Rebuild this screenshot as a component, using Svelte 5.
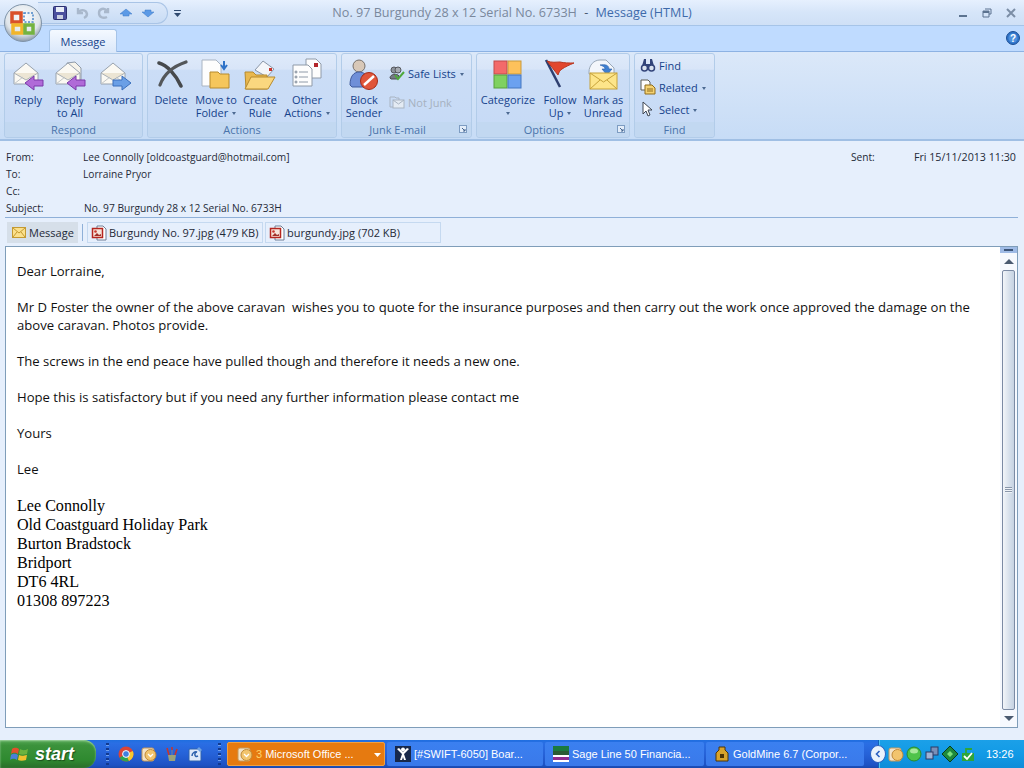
<script>
  const rows = [
    { label: 'From:', value: 'Lee Connolly [oldcoastguard@hotmail.com]' },
    { label: 'To:', value: 'Lorraine Pryor' },
    { label: 'Cc:', value: '' }
  ];
  const attachments = ['Burgundy No. 97.jpg (479 KB)', 'burgundy.jpg (702 KB)'];
  const signature = [
    'Lee Connolly',
    'Old Coastguard Holiday Park',
    'Burton Bradstock',
    'Bridport',
    'DT6 4RL',
    '01308 897223'
  ];
  const quick = ['chrome', 'outlook', 'pens', 'ie'];
</script>

{#snippet envelope()}
  <path d="M3 15 15 5l12 10v11H3z" fill="#fbf9f3" stroke="#98a2ae" />
  <path d="M3 15l12 7 12-7" fill="#ece5d4" stroke="#aab0b6" />
  <path d="M3 26l9-7M27 26l-9-7" stroke="#c2c5c6" fill="none" />
{/snippet}

{#snippet arrowLeft()}
  <path d="M14 25l9-7v4h9v6h-9v4z" fill="#b06ad8" stroke="#7a38a8" />
{/snippet}

{#snippet jpgIcon()}
  <svg class="file" viewBox="0 0 16 16" width="16" height="16">
    <path d="M6 1h6l3 3v11H6z" fill="#fff" stroke="#6f7f96" />
    <rect x="1.500" y="3.500" width="10" height="9" fill="#f7e4da" stroke="#b5261f" stroke-width="1.500" />
    <circle cx="4.500" cy="6.500" r="1.300" fill="#c8352c" />
    <path d="M3 11l3-3 2 2 2-1v2z" fill="#a03028" />
  </svg>
{/snippet}

{#snippet launcher()}
  <svg class="launcher" viewBox="0 0 8 8" width="8" height="8">
    <rect x="0.500" y="0.500" width="7" height="7" fill="#e3edf9" stroke="#7d9cc2" />
    <path d="M3 3l3 3M6 4v2H4" fill="none" stroke="#45658f" />
  </svg>
{/snippet}

<div class="window">
  <svg class="orb" viewBox="0 0 38 38" width="38" height="38">
    <defs>
      <radialGradient id="orbFill" cx="50%" cy="35%" r="65%">
        <stop offset="0" stop-color="#fbfcfd" />
        <stop offset="0.7" stop-color="#dfe5ea" />
        <stop offset="1" stop-color="#8b9aaa" />
      </radialGradient>
    </defs>
    <circle cx="19" cy="19" r="18.500" fill="url(#orbFill)" stroke="#7f93a8" />
    <path d="M8 9h9v9H8z" fill="none" stroke="#d9502a" stroke-width="3.500" />
    <path d="M9 21h9v8H9z" fill="none" stroke="#f2b52a" stroke-width="3.500" />
    <path d="M21 21h8v8h-8z" fill="none" stroke="#74b340" stroke-width="3.500" />
    <path d="M20 9h9v9h-9z" fill="none" stroke="#4a86c8" stroke-width="1.500" stroke-dasharray="2 1.500" />
  </svg>

  <header class="titlebar">
    <div class="title-left">
      <div class="qat">
        <svg viewBox="0 0 14 14" width="14" height="14">
          <rect x="0.500" y="0.500" width="13" height="13" rx="1" fill="#4a4f9e" stroke="#2b2f70" />
          <rect x="3" y="1" width="8" height="5" fill="#e8edf7" />
          <rect x="4" y="9" width="6" height="4" fill="#c9cfe0" />
        </svg>
        <svg viewBox="0 0 14 14" width="14" height="14">
          <path d="M3 2v5h5M3 7c2-4 8-4 9 1 0 2-1 3-3 4" fill="none" stroke="#a9b8cc" stroke-width="2.400" />
        </svg>
        <svg viewBox="0 0 14 14" width="14" height="14">
          <path d="M11 2v4H7M10 5C7 1 2 3 2 7s4 6 8 4" fill="none" stroke="#a9b8cc" stroke-width="2.400" />
        </svg>
        <svg viewBox="0 0 14 14" width="14" height="14">
          <path d="M7 3l6 5h-3v2H4V8H1z" fill="#5c9ae6" stroke="#3f78c4" stroke-width="0.500" />
        </svg>
        <svg viewBox="0 0 14 14" width="14" height="14">
          <path d="M7 11L1 6h3V4h6v2h3z" fill="#5c9ae6" stroke="#3f78c4" stroke-width="0.500" />
        </svg>
      </div>
      <svg class="qat-more" viewBox="0 0 7 7" width="7" height="7">
        <path d="M0 0h7v1H0zM0 3h7L3.500 7z" fill="#2f4a70" />
      </svg>
    </div>
    <div class="title-text">No. 97 Burgundy 28 x 12 Serial No. 6733H <span class="dash">-</span> <span class="title-type">Message (HTML)</span></div>
    <div class="window-btns">
      <svg viewBox="0 0 10 10" width="10" height="10"><rect x="1" y="7" width="8" height="2" fill="#5c7390" /></svg>
      <svg viewBox="0 0 10 10" width="10" height="10">
        <path d="M3 1h6v5H7M1 3h6v6H1z" fill="none" stroke="#5c7390" />
        <rect x="1" y="3" width="6" height="2" fill="#5c7390" />
      </svg>
      <svg viewBox="0 0 10 10" width="10" height="10"><path d="M1 1l8 8M9 1L1 9" stroke="#7c8ea6" stroke-width="2" /></svg>
    </div>
  </header>

  <div class="tabs">
    <div class="tab">Message</div>
    <svg class="help" viewBox="0 0 14 14" width="14" height="14">
      <circle cx="7" cy="7" r="6.500" fill="#2e72c8" stroke="#1d4f94" />
      <circle cx="7" cy="7" r="4.500" fill="#4e90dc" />
      <text x="7" y="10.500" text-anchor="middle" class="help-q">?</text>
    </svg>
  </div>

  <div class="ribbon">
    <section class="group g-respond">
      <div class="group-items">
        <div class="big w-reply">
          <svg viewBox="0 0 34 34" width="34" height="34">{@render envelope()}{@render arrowLeft()}</svg>
          <span>Reply</span>
        </div>
        <div class="big w-all">
          <svg viewBox="0 0 34 34" width="34" height="34">
            <path d="M14 5l8-1 6 6v12H14z" fill="#f6f3ea" stroke="#8f9aa8" />
            {@render envelope()}{@render arrowLeft()}
          </svg>
          <span>Reply<br />to All</span>
        </div>
        <div class="big w-forward">
          <svg viewBox="0 0 34 34" width="34" height="34">
            {@render envelope()}
            <path d="M33 25l-9-7v4h-9v6h9v4z" fill="#6a9fe6" stroke="#3a6fbc" />
          </svg>
          <span>Forward</span>
        </div>
      </div>
      <div class="group-label">Respond</div>
    </section>

    <section class="group g-actions">
      <div class="group-items">
        <div class="big w-delete">
          <svg viewBox="0 0 34 34" width="34" height="34">
            <path d="M5 5c8 2 17 12 22 23" fill="none" stroke="#46494c" stroke-width="3.600" stroke-linecap="round" />
            <path d="M32 4C20 8 10 16 6 27" fill="none" stroke="#54575a" stroke-width="3.200" stroke-linecap="round" />
          </svg>
          <span>Delete</span>
        </div>
        <div class="big w-move">
          <svg viewBox="0 0 34 34" width="34" height="34">
            <path d="M3 2h14l5 5v21H3z" fill="#fdfdfd" stroke="#a9b4c2" />
            <path d="M11 14h8l2 2h9v14H11z" fill="#f5c65c" stroke="#b68a2e" />
            <path d="M25 3v7m-3-3l3 4 3-4" fill="none" stroke="#2e72c8" stroke-width="2" />
          </svg>
          <span>Move to<br />Folder<i class="caret"></i></span>
        </div>
        <div class="big w-rule">
          <svg viewBox="0 0 34 34" width="34" height="34">
            <path d="M12 12l8-9 11 8-7 8z" fill="#f4f6fa" stroke="#8b97a8" />
            <rect x="26" y="10" width="3" height="3" fill="#c8352c" />
            <path d="M2 14h8l3 3h11v14H3z" fill="#e9b84e" stroke="#b68a2e" />
            <path d="M8 19h24l-7 12H2z" fill="#fad77f" stroke="#b68a2e" />
          </svg>
          <span>Create<br />Rule</span>
        </div>
        <div class="big w-other">
          <svg viewBox="0 0 34 34" width="34" height="34">
            <path d="M16 1h10l5 5v14H16z" fill="#fdfdfd" stroke="#8f9aa8" />
            <rect x="24" y="5" width="4" height="4" fill="#b3262c" />
            <path d="M3 7h15l4 4v17H3z" fill="#fdfdfd" stroke="#8f9aa8" />
            <path d="M9 14h9M9 19h9M9 24h9" stroke="#8f9aa8" />
            <circle cx="6" cy="14" r="1" fill="none" stroke="#7a8796" />
            <circle cx="6" cy="19" r="1" fill="none" stroke="#7a8796" />
            <circle cx="6" cy="24" r="1" fill="none" stroke="#7a8796" />
          </svg>
          <span>Other<br />Actions<i class="caret"></i></span>
        </div>
      </div>
      <div class="group-label">Actions</div>
    </section>

    <section class="group g-junk">
      <div class="group-items">
        <div class="big w-block">
          <svg viewBox="0 0 34 34" width="34" height="34">
            <circle cx="12" cy="8" r="6" fill="#d8c8b8" stroke="#77706a" />
            <path d="M3 27c0-9 4-13 9-13s8 3 9 8l-4 7H5z" fill="#6f8fd8" stroke="#3f5a9c" />
            <circle cx="22" cy="23" r="8.500" fill="#e0553a" stroke="#a52c18" />
            <path d="M17 27l10-9" stroke="#fff" stroke-width="2.500" />
          </svg>
          <span>Block<br />Sender</span>
        </div>
        <div class="small-col junk-col">
          <div class="small">
            <svg viewBox="0 0 16 16" width="16" height="16">
              <circle cx="5" cy="5" r="3" fill="#8e949c" stroke="#55585e" />
              <circle cx="9" cy="5" r="3" fill="#a6abb2" stroke="#55585e" />
              <path d="M1 13c0-4 7-5 9-2l-1 3H2z" fill="#747a84" stroke="#4a4c52" />
              <path d="M6 10l3 4 6-7" fill="none" stroke="#4ea83a" stroke-width="2" />
            </svg>
            <span>Safe Lists<i class="caret"></i></span>
          </div>
          <div class="small disabled">
            <svg viewBox="0 0 16 16" width="16" height="16">
              <path d="M1 3h5l1 1h3v9H1z" fill="none" stroke="#a9b4c2" />
              <rect x="4" y="6" width="11" height="8" fill="#e4ebf4" stroke="#a9b4c2" />
              <path d="M4 6l5.500 4L15 6" fill="none" stroke="#a9b4c2" />
            </svg>
            <span>Not Junk</span>
          </div>
        </div>
      </div>
      <div class="group-label has-launcher">Junk E-mail{@render launcher()}</div>
    </section>

    <section class="group g-options">
      <div class="group-items">
        <div class="big w-cat">
          <svg viewBox="0 0 32 32" width="32" height="32">
            <rect x="2" y="2" width="13" height="13" fill="#f36a6a" stroke="#c24a4a" />
            <rect x="16" y="2" width="13" height="13" fill="#fdc15b" stroke="#c99a3c" />
            <rect x="2" y="16" width="13" height="13" fill="#7fd160" stroke="#58a03c" />
            <rect x="16" y="16" width="13" height="13" fill="#6ba1f0" stroke="#4576c0" />
          </svg>
          <span>Categorize<br /><i class="caret solo"></i></span>
        </div>
        <div class="big w-follow">
          <svg viewBox="0 0 34 34" width="34" height="34">
            <path d="M3 2l14 27" stroke="#2e3f70" stroke-width="2.500" />
            <path d="M4 3c5 2 9 1 13 1 4 1 9 1 14 1-5 2-9 4-12 6-2 1-3 3-4 6z" fill="#e2472e" stroke="#b8361f" />
          </svg>
          <span>Follow<br />Up<i class="caret"></i></span>
        </div>
        <div class="big w-mark">
          <svg viewBox="0 0 34 34" width="34" height="34">
            <path d="M3 14C3 7 8 2 14 2h6l8 8v6H3z" fill="#f3f6fb" stroke="#9aa8b8" />
            <path d="M14 7c5-1 9 0 9 4h3l-5 6-5-6h3c0-2-2-3-5-4z" fill="#3f7fd0" stroke="#2b5fa8" stroke-width="0.600" />
            <rect x="4" y="15" width="27" height="16" fill="#fde58a" stroke="#c6a23a" />
            <path d="M4 15l13.500 9L31 15M4 31l10-9M31 31l-10-9" fill="none" stroke="#c6a23a" />
          </svg>
          <span>Mark as<br />Unread</span>
        </div>
      </div>
      <div class="group-label has-launcher">Options{@render launcher()}</div>
    </section>

    <section class="group g-find">
      <div class="small-col find-col">
        <div class="small">
          <svg viewBox="0 0 16 16" width="16" height="16">
            <path d="M2 9l2-7h2v5h4V2h2l2 7" fill="#33457a" />
            <circle cx="4.500" cy="11" r="3" fill="#dbe4f0" stroke="#33457a" stroke-width="1.500" />
            <circle cx="11.500" cy="11" r="3" fill="#dbe4f0" stroke="#33457a" stroke-width="1.500" />
          </svg>
          <span>Find</span>
        </div>
        <div class="small">
          <svg viewBox="0 0 16 16" width="16" height="16">
            <path d="M1 1h7l2 2v8H1z" fill="#fdfdfd" stroke="#5c5c54" />
            <path d="M5 6h7l3 3v6H5z" fill="#f5d272" stroke="#8f6d1c" />
            <path d="M7 10h6M7 12h6" stroke="#8f6d1c" />
          </svg>
          <span>Related<i class="caret"></i></span>
        </div>
        <div class="small">
          <svg viewBox="0 0 16 16" width="16" height="16">
            <path d="M3 1v12l3-3 2 5 2-1-2-5h4z" fill="#fff" stroke="#3c4450" />
          </svg>
          <span>Select<i class="caret"></i></span>
        </div>
      </div>
      <div class="group-label">Find</div>
    </section>
  </div>

  <div class="msg-head">
    {#each rows as row, i}
      <div class="head-row">
        <span class="head-label">{row.label}</span>
        <span class="head-value">{row.value}</span>
        {#if i === 0}
          <span class="sent-label">Sent:</span>
          <span class="sent-value">Fri 15/11/2013 11:30</span>
        {/if}
      </div>
    {/each}
    <div class="head-row subject">
      <span class="head-label">Subject:</span>
      <span class="head-value">No. 97 Burgundy 28 x 12 Serial No. 6733H</span>
    </div>
  </div>

  <div class="attach-bar">
    <div class="attach-msg">
      <svg viewBox="0 0 14 12" width="14" height="12">
        <rect x="0.500" y="0.500" width="13" height="10" fill="#fbe08c" stroke="#c49a32" />
        <path d="M1 1l6 5 6-5M1 10l4-5M13 10L9 5" fill="none" stroke="#c49a32" />
      </svg>
      Message
    </div>
    <i class="attach-sep"></i>
    {#each attachments as name}
      <div class="attach-file">
        {@render jpgIcon()}
        <span>{name}</span>
      </div>
    {/each}
  </div>

  <div class="body-frame">
    <div class="mail">
      <p>Dear Lorraine,</p>
      <p>Mr D Foster the owner of the above caravan&nbsp; wishes you to quote for the insurance purposes and then carry out the work once approved the damage on the above caravan. Photos provide.</p>
      <p>The screws in the end peace have pulled though and therefore it needs a new one.</p>
      <p>Hope this is satisfactory but if you need any further information please contact me</p>
      <p>Yours</p>
      <p>Lee</p>
      <div class="signature">
        {#each signature as line}
          <div>{line}</div>
        {/each}
      </div>
    </div>
    <div class="scrollbar">
      <div class="split"><i></i></div>
      <div class="sb-arrow"><i class="tri up"></i></div>
      <div class="thumb"><i class="grip"></i></div>
      <div class="sb-arrow"><i class="tri down"></i></div>
    </div>
  </div>

  <footer class="taskbar">
    <div class="start">
      <svg viewBox="0 0 20 18" width="20" height="18">
        <path d="M2 4c3-2 5-1 7 0l-1 5c-2-1-4-2-7 0z" fill="#e2502c" />
        <path d="M10 4c2 1 4 2 8 0l-1 5c-3 1-6 1-8 0z" fill="#6cb33f" />
        <path d="M1 10c3-2 5-1 7 0l-1 5c-2-1-4-2-7 0z" fill="#4a7fd8" />
        <path d="M9 10c2 1 4 1 8 0l-1 5c-3 1-6 1-8 0z" fill="#f2c02e" />
      </svg>
      <span>start</span>
    </div>
    <i class="dots"></i>
    <div class="quick">
      {#each quick as app}
        <svg viewBox="0 0 16 16" width="16" height="16">
          {#if app === 'chrome'}
            <circle cx="8" cy="8" r="7.500" fill="#dc4437" />
            <path d="M8 8L1.500 11.700A7.500 7.500 0 0 0 11 14.900z" fill="#2ea44f" />
            <path d="M8 8l3 6.900A7.500 7.500 0 0 0 14.800 5z" fill="#f7c82e" />
            <circle cx="8" cy="8" r="3.400" fill="#3f7fe0" stroke="#fff" />
          {:else if app === 'outlook'}
            <rect x="1" y="2" width="12" height="13" rx="2" fill="#f3e3c9" stroke="#c69858" />
            <circle cx="9.500" cy="9" r="5.500" fill="#f2c46d" stroke="#c08a38" />
            <path d="M7 8l2.500 2.500L12 8" fill="none" stroke="#fff" stroke-width="1.300" />
          {:else if app === 'pens'}
            <path d="M4 9h8l-1 6H5z" fill="#9aa27a" />
            <path d="M5 9L3 2M8 9V1M11 9l2-6" stroke-width="1.600" stroke="#c8352c" />
            <path d="M8 9V4" stroke="#3f7fd0" stroke-width="1.600" />
          {:else}
            <rect x="2" y="3" width="12" height="12" rx="1" fill="#dfeafa" stroke="#2f62ad" />
            <path d="M5 10c0-3 3-5 5-4-3 0-3 6 1 4" fill="none" stroke="#2f62ad" stroke-width="1.500" />
            <path d="M12 1l3 3-2 2-3-3z" fill="#6ea2e4" />
          {/if}
        </svg>
      {/each}
    </div>
    <i class="dots"></i>
    <div class="task active">
      <svg viewBox="0 0 16 16" width="16" height="16">
        <rect x="1" y="2" width="12" height="13" rx="2" fill="#f3e3c9" stroke="#c69858" />
        <circle cx="9.500" cy="9" r="5.500" fill="#f2c46d" stroke="#c08a38" />
        <path d="M7 8l2.500 2.500L12 8" fill="none" stroke="#fff" stroke-width="1.300" />
      </svg>
      <span><b>3</b> Microsoft Office ...</span>
      <svg class="task-caret" viewBox="0 0 7 4" width="7" height="4"><path d="M0 0h7L3.500 4z" fill="#fff" /></svg>
    </div>
    <div class="task t-jira">
      <svg viewBox="0 0 16 16" width="16" height="16">
        <rect width="16" height="16" fill="#18284a" />
        <circle cx="8" cy="3.500" r="2" fill="#fff" />
        <path d="M2 3l5 5-2 6h2l1-3 1 3h2L9 8l5-5-2-1-4 4-4-4z" fill="#fff" />
      </svg>
      <span>[#SWIFT-6050] Boar...</span>
    </div>
    <div class="task t-sage">
      <svg viewBox="0 0 16 16" width="16" height="16">
        <rect width="16" height="16" fill="#fff" />
        <rect width="16" height="5" fill="#1b7a3e" />
        <rect y="5" width="16" height="4" fill="#2a5c34" />
        <rect y="11" width="16" height="3" fill="#8e2d8e" />
      </svg>
      <span>Sage Line 50 Financia...</span>
    </div>
    <div class="task t-gold">
      <svg viewBox="0 0 16 16" width="16" height="16">
        <path d="M5 1h6v3l3 3v8H2V7l3-3z" fill="#d8a32c" stroke="#4d3408" />
        <rect x="6" y="8" width="4" height="4" fill="#4d3408" />
      </svg>
      <span>GoldMine 6.7 (Corpor...</span>
    </div>
    <div class="tray">
      <div class="tray-back">
        <svg viewBox="0 0 8 8" width="8" height="8"><path d="M5.500 1L2.500 4l3 3" fill="none" stroke="#2a5fc0" stroke-width="1.600" /></svg>
      </div>
      <svg viewBox="0 0 16 16" width="16" height="16">
        <rect x="1" y="2" width="12" height="13" rx="2" fill="#f3e3c9" stroke="#c69858" />
        <circle cx="9.500" cy="9" r="5.500" fill="#f2c46d" stroke="#c08a38" />
      </svg>
      <svg viewBox="0 0 16 16" width="16" height="16">
        <circle cx="8" cy="8" r="7" fill="#4fc34a" stroke="#2a8a2c" />
        <ellipse cx="8" cy="5" rx="4" ry="2.500" fill="#a9e89c" />
      </svg>
      <svg viewBox="0 0 16 16" width="16" height="16">
        <rect x="7" y="1" width="7" height="8" fill="#7a8fb8" stroke="#2b3b66" />
        <rect x="2" y="6" width="7" height="7" fill="#9fb2d4" stroke="#2b3b66" />
      </svg>
      <svg viewBox="0 0 16 16" width="16" height="16">
        <path d="M8 0l8 8-8 8-8-8z" fill="#1e8a3c" stroke="#0b3d1a" />
        <path d="M5 8l3-3 3 3-3 3z" fill="#7be07c" />
      </svg>
      <svg viewBox="0 0 16 16" width="16" height="16">
        <rect x="2" y="7" width="12" height="8" fill="#2fa53a" />
        <path d="M4 10l3 3 5-6" fill="none" stroke="#fff" stroke-width="1.800" />
        <path d="M6 7V3h6" fill="none" stroke="#2fa53a" stroke-width="1.800" />
      </svg>
      <span class="clock">13:26</span>
    </div>
  </footer>
</div>

<style>
  :global(body) {
    margin: 0;
    overflow: hidden;
  }

  .window {
    position: relative;
    width: 1024px;
    height: 768px;
    display: flex;
    flex-direction: column;
    background: #e6effc;
    font-family: "Open Sans", "Noto Sans", sans-serif;
    overflow: hidden;
  }

  svg {
    display: block;
    flex: none;
  }

  .orb {
    position: absolute;
    left: 4px;
    top: 4px;
    z-index: 2;
  }

  /* title bar */
  .titlebar {
    height: 26px;
    box-sizing: border-box;
    display: grid;
    grid-template-columns: 1fr auto 1fr;
    align-items: center;
    background: linear-gradient(#e6f0fe, #d6e5f9 50%, #cfe0f6);
    border-bottom: 1px solid #a6c4e8;
  }

  .title-left {
    display: flex;
    align-items: center;
    gap: 6px;
    align-self: start;
    padding-left: 38px;
  }

  .qat {
    height: 22px;
    width: 130px;
    box-sizing: border-box;
    padding: 0 0 0 15px;
    display: flex;
    align-items: center;
    gap: 8px;
    margin-top: 2px;
    border: 1px solid #a9c4e6;
    border-left: none;
    border-radius: 0 12px 12px 0;
    background: linear-gradient(#dde9fa, #c8dcf5);
  }

  .qat-more {
    margin-top: 3px;
  }

  .title-text {
    font-size: 12.6px;
    color: #7a889c;
    white-space: pre;
  }

  .title-type {
    color: #3e6aaa;
  }

  .dash {
    color: #4a5a72;
    margin: 0 4px;
  }

  .window-btns {
    justify-self: end;
    display: flex;
    gap: 14px;
    padding-right: 8px;
  }

  /* tabs */
  .tabs {
    height: 26px;
    box-sizing: border-box;
    padding-left: 49px;
    padding-right: 4px;
    display: flex;
    align-items: flex-end;
    justify-content: space-between;
    background: #bfdbff;
    border-bottom: 1px solid #8db2e3;
  }

  .tab {
    width: 68px;
    height: 23px;
    box-sizing: border-box;
    text-align: center;
    padding-top: 4px;
    font-size: 11px;
    color: #15428b;
    background: linear-gradient(#f4f9ff, #dbe8fa);
    border: 1px solid #a6c4e8;
    border-bottom: none;
    border-radius: 3px 3px 0 0;
    margin-bottom: -1px;
  }

  .help {
    margin-bottom: 6px;
  }

  .help-q {
    font-size: 10px;
    font-weight: 700;
    fill: #fff;
    font-family: "Liberation Sans", sans-serif;
  }

  /* ribbon */
  .ribbon {
    height: 89px;
    box-sizing: border-box;
    padding: 1px 4px 0;
    display: flex;
    gap: 4px;
    background: linear-gradient(#dbe8f9, #c7dcf6);
    border-bottom: 2px solid #a0bfe4;
  }

  .group {
    height: 85px;
    box-sizing: border-box;
    display: flex;
    flex-direction: column;
    border: 1px solid #b2cce9;
    border-radius: 3px;
    background: linear-gradient(#dfeafa, #d8e5f8 18%, #cbddf6 20%, #c6daf6);
  }

  .g-respond { width: 139px; }
  .g-actions { width: 190px; }
  .g-junk { width: 131px; }
  .g-options { width: 154px; }
  .g-find { width: 81px; }

  .group-items {
    flex: 1;
    display: flex;
  }

  .group-label {
    position: relative;
    height: 15px;
    flex: none;
    text-align: center;
    font-size: 11px;
    line-height: 15px;
    color: #4a74ab;
    background: #c2d8f1;
    border-radius: 0 0 3px 3px;
  }

  .group-label.has-launcher {
    padding-right: 18px;
  }

  .launcher {
    position: absolute;
    right: 4px;
    top: 3px;
  }

  .big {
    box-sizing: border-box;
    padding-top: 4px;
    display: flex;
    flex-direction: column;
    align-items: center;
    font-size: 11px;
    line-height: 13px;
    text-align: center;
    color: #15428b;
    white-space: nowrap;
  }

  .big span {
    margin-top: 1px;
  }

  .w-reply { width: 46px; }
  .w-all { width: 38px; }
  .w-forward { width: 52px; }
  .w-delete { width: 46px; }
  .w-move { width: 44px; }
  .w-rule { width: 44px; }
  .w-other { width: 50px; }
  .w-block { width: 44px; }
  .w-cat { width: 62px; }
  .w-follow { width: 42px; }
  .w-mark { width: 44px; }

  .w-cat svg {
    margin-top: 1px;
    margin-bottom: 1px;
  }

  .small-col {
    display: flex;
    flex-direction: column;
  }

  .junk-col {
    padding: 10px 0 0 3px;
    gap: 11px;
  }

  .find-col {
    flex: 1;
    padding: 2px 0 0 5px;
    gap: 4px;
  }

  .small {
    height: 18px;
    display: flex;
    align-items: center;
    gap: 3px;
    font-size: 11px;
    color: #15428b;
    white-space: nowrap;
  }

  .small.disabled {
    color: #a6b1c0;
  }

  .caret {
    display: inline-block;
    margin-left: 4px;
    vertical-align: 2px;
    border: 2.5px solid transparent;
    border-top: 3px solid #4d6a92;
    border-bottom: none;
  }

  .caret.solo {
    margin-left: 0;
  }

  /* message header */
  .msg-head {
    height: 77px;
    box-sizing: border-box;
    margin: 0 6px 0 5px;
    padding-top: 7px;
    border-bottom: 1px solid #8fb0d8;
    display: flex;
    flex-direction: column;
  }

  .head-row {
    height: 17px;
    flex: none;
    display: flex;
    align-items: center;
    font-size: 10.2px;
    color: #1f2a38;
  }

  .head-label {
    width: 77px;
    padding-left: 1px;
    flex: none;
  }

  .head-value {
    flex: 1;
  }

  .subject .head-value {
    padding-left: 1px;
  }

  .sent-label {
    width: 63px;
  }

  .sent-value {
    font-size: 10.7px;
    padding-right: 2px;
  }

  /* attachments */
  .attach-bar {
    height: 28px;
    box-sizing: border-box;
    padding: 4px 0 3px 7px;
    display: flex;
    align-items: stretch;
    font-size: 11px;
    color: #1f2a38;
  }

  .attach-msg {
    width: 71px;
    box-sizing: border-box;
    padding-left: 5px;
    display: flex;
    align-items: center;
    gap: 3px;
    background: #d6dfe9;
  }

  .attach-sep {
    width: 1px;
    margin: 2px 4px 2px 4px;
    background: #8fb0d8;
  }

  .attach-file {
    width: 176px;
    box-sizing: border-box;
    margin-right: 2px;
    padding-left: 3px;
    display: flex;
    align-items: center;
    gap: 2px;
    border: 1px solid #c5d9f0;
  }

  /* message body */
  .body-frame {
    height: 482px;
    box-sizing: border-box;
    margin: 0 6px 0 5px;
    display: flex;
    background: #fff;
    border: 1px solid #7f9db9;
  }

  .mail {
    flex: 1;
    padding: 15px 20px 0 11px;
    font-size: 13.1px;
    line-height: 18px;
    color: #111;
  }

  .mail p {
    margin: 0 0 18px;
  }

  .signature {
    font-family: "Liberation Serif", serif;
    font-size: 16.1px;
    line-height: 19px;
    color: #000;
  }

  .scrollbar {
    width: 17px;
    display: flex;
    flex-direction: column;
    align-items: center;
    background: #f6f9fe;
  }

  .split {
    align-self: stretch;
    height: 6px;
    display: flex;
    align-items: center;
    justify-content: center;
    background: #9fbbe6;
  }

  .split i {
    width: 9px;
    height: 2px;
    background: #3c5478;
  }

  .sb-arrow {
    height: 17px;
    width: 100%;
    display: flex;
    align-items: center;
    justify-content: center;
    flex: none;
  }

  .tri {
    border: 5px solid transparent;
  }

  .tri.up {
    border-bottom: 5px solid #4a5a70;
    border-top: none;
  }

  .tri.down {
    border-top: 5px solid #4a5a70;
    border-bottom: none;
  }

  .thumb {
    flex: 1;
    width: 13px;
    box-sizing: border-box;
    display: flex;
    align-items: center;
    justify-content: center;
    border: 1px solid #7c8ba4;
    border-radius: 2px;
    background: linear-gradient(90deg, #f2f5f9, #d5dfeb 60%, #c7d3e2);
  }

  .grip {
    width: 7px;
    height: 6px;
    background: repeating-linear-gradient(#8a97aa 0 1px, #eef2f7 1px 2px);
  }

  /* taskbar */
  .taskbar {
    margin-top: auto;
    height: 28px;
    box-sizing: border-box;
    display: flex;
    align-items: center;
    background: linear-gradient(#1f6fe0, #2a6ee4 12%, #2662d8 50%, #1d52c4 90%, #1a48ac);
    font-family: "Liberation Sans", sans-serif;
    font-size: 11px;
    color: #fff;
  }

  .start {
    width: 96px;
    height: 28px;
    flex: none;
    box-sizing: border-box;
    padding-left: 10px;
    display: flex;
    align-items: center;
    gap: 5px;
    border-radius: 0 12px 12px 0;
    background: linear-gradient(#53a653, #3b923b 20%, #2f8a30 70%, #2a6e2a);
    box-shadow: inset 0 1px 2px #a2d6a2;
  }

  .start span {
    font-size: 18px;
    font-weight: 700;
    font-style: italic;
    text-shadow: 1px 1px 1px #1c4e1c;
  }

  .dots {
    width: 3px;
    height: 22px;
    flex: none;
    margin-left: 10px;
    background: repeating-linear-gradient(#12398f 0 2px, #6fa0ee 2px 3px, transparent 3px 5px);
  }

  .quick {
    display: flex;
    gap: 7px;
    margin-left: 9px;
    margin-right: -2px;
    width: 92px;
    flex: none;
  }

  .task {
    height: 24px;
    flex: none;
    box-sizing: border-box;
    margin-right: 2px;
    padding-left: 8px;
    display: flex;
    align-items: center;
    gap: 3px;
    border-radius: 2px;
    background: linear-gradient(#3b80f0, #3a79ea);
    white-space: nowrap;
    overflow: hidden;
  }

  .task.active {
    position: relative;
    width: 158px;
    margin-left: 6px;
    padding-left: 9px;
    background: #e67a10;
    border: 1px solid #f0a040;
  }

  .task.active b {
    color: #ffd46a;
    font-weight: 400;
  }

  .task-caret {
    position: absolute;
    right: 3px;
    top: 10px;
  }

  .t-jira { width: 156px; }
  .t-sage { width: 159px; }
  .t-gold { width: 158px; }

  .tray {
    height: 28px;
    flex: 1;
    margin-left: 12px;
    box-sizing: border-box;
    display: flex;
    align-items: center;
    gap: 2px;
    background: linear-gradient(#1ba0e8, #129ae6 50%, #0f8cd8);
    border-left: 1px solid #0e62b8;
    box-shadow: inset 1px 0 0 #4ec0f2;
  }

  .tray-back {
    width: 16px;
    height: 18px;
    margin-left: -9px;
    flex: none;
    display: flex;
    align-items: center;
    justify-content: center;
    border-radius: 50%;
    background: #eaf2fc;
    border: 1px solid #2a5fc0;
    box-sizing: border-box;
  }

  .clock {
    margin-left: 8px;
  }
</style>
